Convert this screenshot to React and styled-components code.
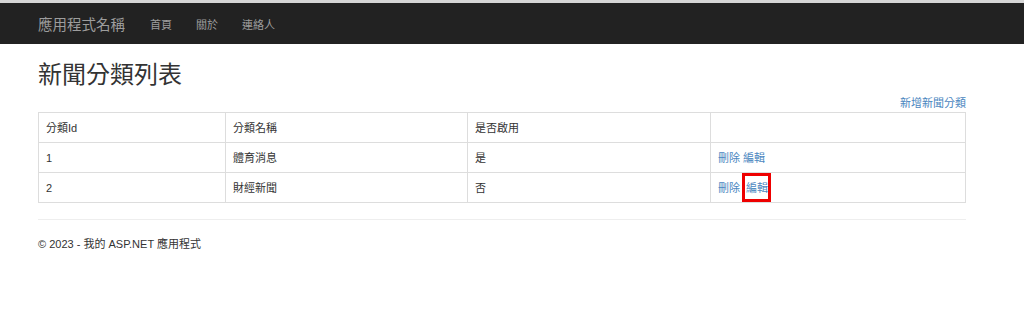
import React from "react";
import styled, { createGlobalStyle } from "styled-components";

const GlobalStyle = createGlobalStyle`
  body {
    margin: 0;
    background: #fff;
    font-family: "Liberation Sans", "Noto Sans CJK TC", sans-serif;
    color: #333;
  }
`;

const Navbar = styled.nav`
  border-top: 3px solid #d6d6d6;
  height: 41px;
  background: #222;
  display: flex;
  align-items: center;
  padding-left: 38px;
`;

const Brand = styled.a`
  font-size: 14.5px;
  color: #9d9d9d;
  margin-right: 13px;
`;

const NavLink = styled.a`
  font-size: 11px;
  color: #9d9d9d;
  padding: 0 12px;
`;

const Container = styled.div`
  padding: 0 58px 0 38px;
`;

const Title = styled.h2`
  margin: 17px 0 0;
  font-size: 24px;
  font-weight: 400;
  line-height: 28px;
  color: #333;
`;

const ActionRow = styled.div`
  display: flex;
  justify-content: flex-end;
  margin-top: 3px;
  height: 20px;
  align-items: center;
`;

const Link = styled.a`
  font-size: 11px;
  color: #4a86c0;
  text-decoration: none;
`;

const Table = styled.table`
  width: 100%;
  border-collapse: collapse;
  font-size: 11px;
  line-height: 14px;
`;

const Cell = styled.td`
  border: 1px solid #ddd;
  height: 29px;
  padding: 0 7px;
  width: ${(p) => p.$w || "auto"};
  vertical-align: middle;
`;

const Marked = styled.span`
  display: inline-block;
  border: 3px solid #e00;
  line-height: 14px;
  padding: 5px 0 4px 1px;
  margin: -8px 0 -7px -1px;
`;

const Divider = styled.hr`
  border: 0;
  border-top: 1px solid #eee;
  margin: 16px 0 0;
`;

const Footer = styled.footer`
  font-size: 11px;
  margin-top: 15px;
`;

const rows = [
  { id: 1, name: "體育消息", on: "是" },
  { id: 2, name: "財經新聞", on: "否", mark: true },
];

export default function App() {
  return (
    <>
      <GlobalStyle />
      <Navbar>
        <Brand>應用程式名稱</Brand>
        <NavLink>首頁</NavLink>
        <NavLink>關於</NavLink>
        <NavLink>連絡人</NavLink>
      </Navbar>
      <Container>
        <Title>新聞分類列表</Title>
        <ActionRow>
          <Link href="#">新增新聞分類</Link>
        </ActionRow>
        <Table>
          <tbody>
            <tr>
              <Cell $w="172px">分類Id</Cell>
              <Cell $w="227px">分類名稱</Cell>
              <Cell $w="228px">是否啟用</Cell>
              <Cell />
            </tr>
            {rows.map((r) => (
              <tr key={r.id}>
                <Cell>{r.id}</Cell>
                <Cell>{r.name}</Cell>
                <Cell>{r.on}</Cell>
                <Cell>
                  <Link href="#">刪除</Link>{" "}
                  {r.mark ? (
                    <Marked>
                      <Link href="#">編輯</Link>
                    </Marked>
                  ) : (
                    <Link href="#">編輯</Link>
                  )}
                </Cell>
              </tr>
            ))}
          </tbody>
        </Table>
        <Divider />
        <Footer>© 2023 - 我的 ASP.NET 應用程式</Footer>
      </Container>
    </>
  );
}
